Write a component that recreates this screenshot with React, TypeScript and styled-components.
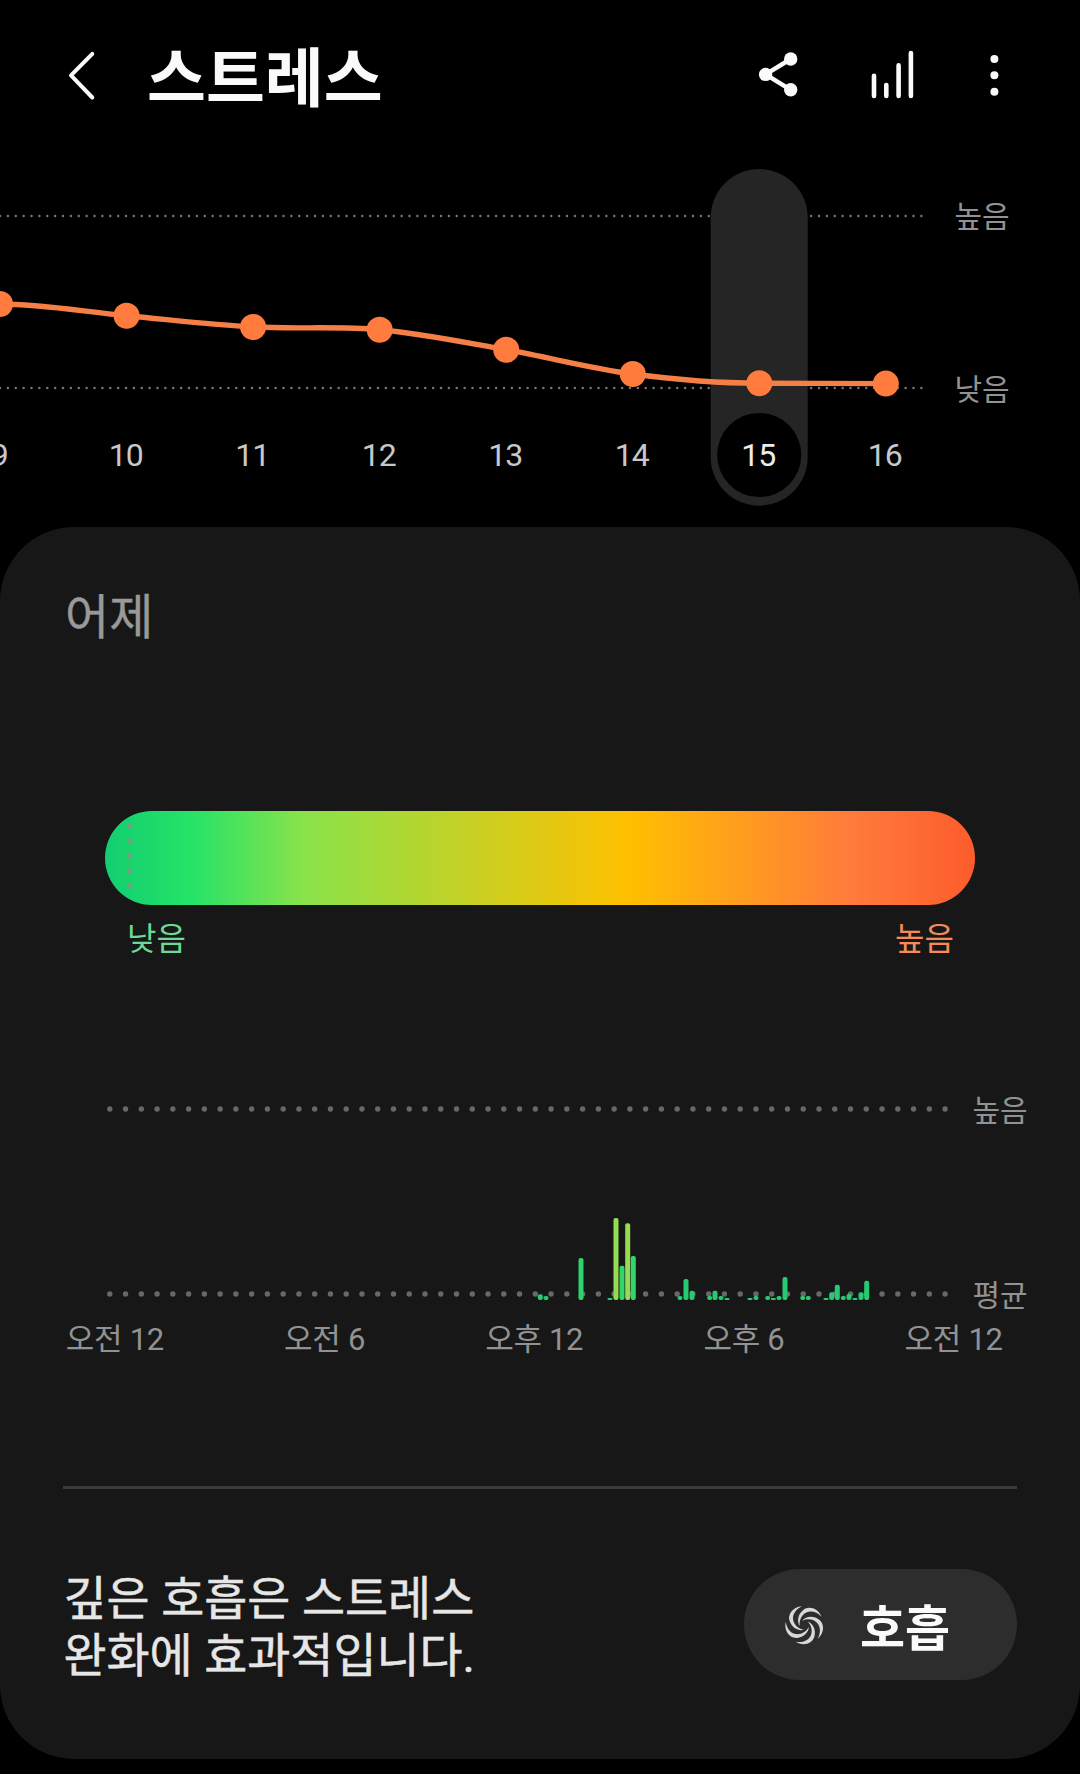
import React from 'react';
import styled, { createGlobalStyle } from 'styled-components';

const GlobalStyle = createGlobalStyle`
  html, body { margin: 0; background: #000; }
  * { box-sizing: border-box; }
`;

const Screen = styled.div`
  width: 1080px;
  height: 1774px;
  overflow: hidden;
  background: #000;
  color: #fafafa;
  font-family: Roboto, 'Noto Sans CJK KR', sans-serif;
  display: flex;
  flex-direction: column;
`;

const Header = styled.header`
  height: 150px;
  padding: 0 70px 0 64px;
  display: flex;
  align-items: center;
  flex-shrink: 0;
`;

const IconButton = styled.button<{ $w: number; $gap?: number }>`
  width: ${(p) => p.$w}px;
  height: 60px;
  margin: 0 0 0 ${(p) => p.$gap ?? 0}px;
  padding: 0;
  border: 0;
  background: none;
  color: #fafafa;
  svg { display: block; }
`;

const Title = styled.h1`
  flex: 1;
  margin: 0 0 0 47px;
  padding-top: 10px;
  font-size: 64px;
  line-height: 90px;
  font-weight: 700;
`;

const Trend = styled.section`
  height: 377px;
  flex-shrink: 0;
  display: grid;
  grid-template-columns: 954.5px 1fr;
  grid-template-rows: 278px 1fr;
`;

const TrendPlot = styled.svg`
  grid-area: 1 / 1 / -1 / -1;
  width: 1080px;
  height: 377px;
`;

const TrendScale = styled.div`
  grid-area: 1 / 2;
  padding: 47px 0 18px;
  display: flex;
  flex-direction: column;
  justify-content: space-between;
`;

const ScaleLabel = styled.span`
  font-size: 30px;
  line-height: 40px;
  color: #929292;
`;

const Days = styled.div`
  grid-area: 2 / 1 / 3 / -1;
  margin-left: -64px;
  display: flex;
`;

const Day = styled.span<{ $active?: boolean }>`
  width: 126.5px;
  flex-shrink: 0;
  padding-top: 7px;
  text-align: center;
  font-size: 32px;
  line-height: 40px;
  letter-spacing: -0.9px;
  color: ${(p) => (p.$active ? '#ececec' : '#c8c8c8')};
`;

const Card = styled.main`
  height: 1232px;
  flex-shrink: 0;
  border-radius: 74px;
  background: #171717;
  display: flex;
  flex-direction: column;
`;

const CardTitle = styled.h2`
  margin: 56px 0 0 65px;
  font-size: 48px;
  line-height: 70px;
  font-weight: 400;
  color: #999;
  -webkit-text-stroke: 0.4px #999;
`;

const Meter = styled.div`
  width: 870px;
  height: 94px;
  margin: 158px 0 0 105px;
  padding: 12px 0 0 22px;
  border-radius: 47px;
  background: linear-gradient(
    90deg,
    #12ce70 0%,
    #26e368 10.1%,
    #8be24a 23%,
    #ffc000 60.1%,
    #ff7a3c 86%,
    #fd5c2c 100%
  );
`;

const MeterLegend = styled.div`
  width: 870px;
  margin: 12px 0 0 105px;
  padding: 0 21px 0 22px;
  display: flex;
  justify-content: space-between;
`;

const LegendText = styled.span<{ $color: string }>`
  font-size: 32px;
  line-height: 44px;
  color: ${(p) => p.$color};
`;

const Hourly = styled.section`
  margin-top: 127px;
  display: flex;
`;

const HourlyPlot = styled.svg`
  width: 972.5px;
  height: 226px;
  flex-shrink: 0;
`;

const HourlyScale = styled.div`
  height: 228px;
  padding-top: 3px;
  display: flex;
  flex-direction: column;
  justify-content: space-between;
`;

const Hours = styled.div`
  margin: 2px 0 0 10px;
  display: flex;
`;

const Hour = styled.span`
  width: 209.7px;
  text-align: center;
  white-space: nowrap;
  font-size: 31px;
  line-height: 44px;
  letter-spacing: -0.3px;
  color: #929292;
`;

const Divider = styled.hr`
  width: 954px;
  height: 3px;
  margin: 124px 0 0 63px;
  border: 0;
  background: #3a3a3a;
`;

const Advice = styled.div`
  margin: 80px 63px 0;
  height: 111px;
  display: flex;
  align-items: center;
  justify-content: space-between;
`;

const AdviceText = styled.p`
  margin: 6px 0 0 0.5px;
  font-size: 46.8px;
  line-height: 57px;
  color: #e6e6e6;
  -webkit-text-stroke: 0.5px #e6e6e6;
`;

const BreathButton = styled.button`
  width: 273px;
  height: 111px;
  padding: 0 0 0 40px;
  border: 0;
  border-radius: 56px;
  background: #2d2d2d;
  color: #fafafa;
  display: flex;
  align-items: center;
  gap: 36px;
  font-family: inherit;
  font-size: 49px;
  font-weight: 700;
  line-height: 70px;
`;

const ButtonText = styled.span`
  padding-top: 10px;
`;

const STEP = 126.55;
const trend = [
  { day: 9, y: 304 },
  { day: 10, y: 315.7 },
  { day: 11, y: 327 },
  { day: 12, y: 329.7 },
  { day: 13, y: 349.7 },
  { day: 14, y: 374 },
  { day: 15, y: 383.2 },
  { day: 16, y: 383.6 },
];
const SELECTED = 15;

const trendPath = () => {
  const slope = (i: number) => {
    const a = trend[Math.max(i - 1, 0)];
    const b = trend[Math.min(i + 1, trend.length - 1)];
    if (i === 0 || i >= trend.length - 2) return 0;
    return (b.y - a.y) / 2;
  };
  return trend.slice(1).reduce((d, p, i) => {
    const x0 = i * STEP;
    const x1 = x0 + STEP;
    const c1 = trend[i].y + slope(i) / 3;
    const c2 = p.y - slope(i + 1) / 3;
    return `${d} C${x0 + STEP / 3} ${c1} ${x1 - STEP / 3} ${c2} ${x1} ${p.y}`;
  }, `M0 ${trend[0].y}`);
};

const LIME = '#94dd52';
const bars: [number, number, string?][] = [
  [540.3, 5.7], [546, 4], [581, 42, '#30d26c'], [610, 2], [616, 82, LIME],
  [622, 34.3, '#33d66b'], [627.7, 76.7, LIME], [633.3, 44, '#33d66b'],
  [680, 4], [686, 21], [692, 9.3], [709.7, 4], [715, 9.3], [721, 4], [727, 2],
  [750, 2], [756, 4], [767.7, 4], [773.3, 2], [779, 4], [785, 23],
  [802.7, 4], [808.3, 4], [826, 2], [831.7, 7.7], [837.3, 15.3], [843.3, 4],
  [849, 6], [855, 2], [861, 7.7], [866.7, 19.3],
];

const Dots = ({ n, x, y, step, r, fill }: { n: number; x: number; y: number; step: number; r: number; fill: string }) => (
  <g fill={fill}>
    {Array.from({ length: n }, (_, i) => (
      <circle key={i} cx={x + i * step} cy={y} r={r} />
    ))}
  </g>
);

const SpiralIcon = () => (
  <svg width="40" height="40" viewBox="-20.5 -20 40 40" fill="#d8d8d8">
    {[0, 72, 144, 216, 288].map((a) => (
      <path
        key={a}
        transform={`rotate(${a})`}
        d="M-2.6 -18.8C-12 -18.2 -17.6 -10 -14.6 -3.2C-12.2 3 -6 6.2 -0.6 4.8C-6.4 3.6 -10.6 -0.4 -11.4 -5.6C-12 -11 -8.6 -16 -2.6 -18.8Z"
      />
    ))}
  </svg>
);

export default function App() {
  return (
    <Screen>
      <GlobalStyle />
      <Header>
        <IconButton $w={36} aria-label="뒤로">
          <svg width="36" height="60" viewBox="64 45 36 60" fill="none" stroke="currentColor" strokeWidth="4" strokeLinecap="round" strokeLinejoin="round">
            <path d="M92.3 53.8L71 75.4L92.3 97.5" />
          </svg>
        </IconButton>
        <Title>스트레스</Title>
        <IconButton $w={50} aria-label="공유">
          <svg width="50" height="60" viewBox="755 45 50 60" fill="currentColor">
            <path d="M790.7 59L765.6 74.4L790.7 89.8" fill="none" stroke="currentColor" strokeWidth="4.4" />
            <circle cx="790.7" cy="59" r="6.7" />
            <circle cx="765.6" cy="74.4" r="6.7" />
            <circle cx="790.7" cy="89.8" r="6.7" />
          </svg>
        </IconButton>
        <IconButton $w={50} $gap={63} aria-label="통계">
          <svg width="50" height="60" viewBox="868 45 50 60" stroke="currentColor" strokeWidth="4.6" strokeLinecap="round">
            <path d="M874 75.8V95.9M886.3 85V95.9M898.6 65.4V95.9M910.9 53V95.9" />
          </svg>
        </IconButton>
        <IconButton $w={30} $gap={62} aria-label="더보기">
          <svg width="30" height="60" viewBox="980 45 30 60" fill="currentColor">
            <circle cx="994.4" cy="59" r="4" />
            <circle cx="994.4" cy="75.3" r="4" />
            <circle cx="994.4" cy="91.8" r="4" />
          </svg>
        </IconButton>
      </Header>

      <Trend>
        <TrendPlot viewBox="0 150 1080 377">
          <Dots n={118} x={0} y={216} step={7.875} r={1.25} fill="#777" />
          <Dots n={118} x={0} y={388} step={7.875} r={1.25} fill="#777" />
          <rect x="710.7" y="169" width="97" height="336.7" rx="48.5" fill="#252525" />
          <circle cx="759.2" cy="455" r="42.1" fill="#000" />
          <path d={trendPath()} fill="none" stroke="#f57f45" strokeWidth="5.4" />
          {trend.map((p, i) => (
            <circle key={p.day} cx={i * STEP} cy={p.y} r="13" fill="#ff7b3e" />
          ))}
        </TrendPlot>
        <TrendScale>
          <ScaleLabel>높음</ScaleLabel>
          <ScaleLabel>낮음</ScaleLabel>
        </TrendScale>
        <Days>
          {trend.map((p) => (
            <Day key={p.day} $active={p.day === SELECTED}>{p.day}</Day>
          ))}
        </Days>
      </Trend>

      <Card>
        <CardTitle>어제</CardTitle>
        <Meter>
          <svg width="6" height="70" viewBox="0 0 6 70">
            <g fill="#7d9a85">
              {[3, 18, 33, 47.8, 62.7].map((y) => (
                <circle key={y} cx="2.7" cy={y} r="2.6" />
              ))}
            </g>
          </svg>
        </Meter>
        <MeterLegend>
          <LegendText $color="#6cda94">낮음</LegendText>
          <LegendText $color="#f58b5b">높음</LegendText>
        </MeterLegend>

        <Hourly>
          <HourlyPlot viewBox="0 1088 972.5 226">
            <Dots n={54} x={109.8} y={1109} step={15.76} r={2.7} fill="#686868" />
            <Dots n={54} x={109.8} y={1294} step={15.76} r={2.7} fill="#686868" />
            {bars.map(([x, h, fill = '#27c973']) => (
              <rect key={x} x={x - 2.5} y={1300 - h} width="5" height={h} rx={Math.min(2, h / 2)} fill={fill} />
            ))}
          </HourlyPlot>
          <HourlyScale>
            <ScaleLabel>높음</ScaleLabel>
            <ScaleLabel>평균</ScaleLabel>
          </HourlyScale>
        </Hourly>
        <Hours>
          <Hour>오전 12</Hour>
          <Hour>오전 6</Hour>
          <Hour>오후 12</Hour>
          <Hour>오후 6</Hour>
          <Hour>오전 12</Hour>
        </Hours>

        <Divider />
        <Advice>
          <AdviceText>
            깊은 호흡은 스트레스
            <br />
            완화에 효과적입니다.
          </AdviceText>
          <BreathButton>
            <SpiralIcon />
            <ButtonText>호흡</ButtonText>
          </BreathButton>
        </Advice>
      </Card>
    </Screen>
  );
}
